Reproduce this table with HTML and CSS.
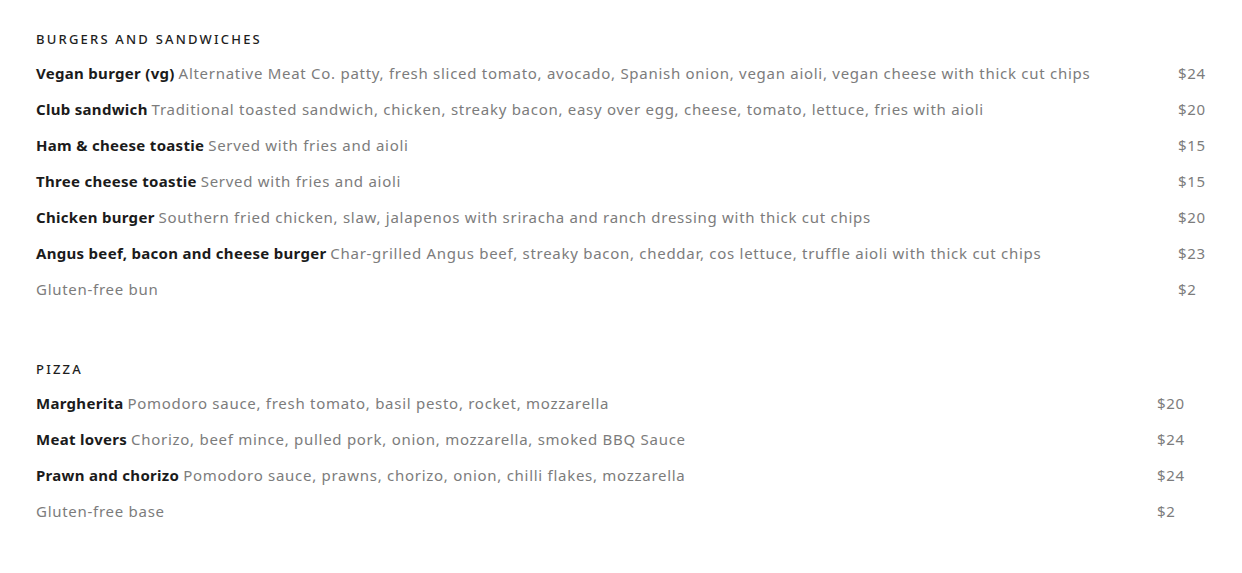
FILE: index.html
```html
<!DOCTYPE html>
<html lang="en">
<head>
<meta charset="utf-8">
<title>Menu</title>
<link rel="stylesheet" href="styles.css">
</head>
<body>
<main class="menu">
  <section class="menu-section">
    <h2 class="section-title">Burgers and sandwiches</h2>
    <div class="items">
      <div class="item">
        <p class="item-text"><span class="item-name">Vegan burger (vg)</span> <span class="item-desc">Alternative Meat Co. patty, fresh sliced tomato, avocado, Spanish onion, vegan aioli, vegan cheese with thick cut chips</span></p>
        <span class="price">$24</span>
      </div>
      <div class="item">
        <p class="item-text"><span class="item-name">Club sandwich</span> <span class="item-desc">Traditional toasted sandwich, chicken, streaky bacon, easy over egg, cheese, tomato, lettuce, fries with aioli</span></p>
        <span class="price">$20</span>
      </div>
      <div class="item">
        <p class="item-text"><span class="item-name">Ham &amp; cheese toastie</span> <span class="item-desc">Served with fries and aioli</span></p>
        <span class="price">$15</span>
      </div>
      <div class="item">
        <p class="item-text"><span class="item-name">Three cheese toastie</span> <span class="item-desc">Served with fries and aioli</span></p>
        <span class="price">$15</span>
      </div>
      <div class="item">
        <p class="item-text"><span class="item-name">Chicken burger</span> <span class="item-desc">Southern fried chicken, slaw, jalapenos with sriracha and ranch dressing with thick cut chips</span></p>
        <span class="price">$20</span>
      </div>
      <div class="item">
        <p class="item-text"><span class="item-name">Angus beef, bacon and cheese burger</span> <span class="item-desc">Char-grilled Angus beef, streaky bacon, cheddar, cos lettuce, truffle aioli with thick cut chips</span></p>
        <span class="price">$23</span>
      </div>
      <div class="item">
        <p class="item-text"><span class="item-desc">Gluten-free bun</span></p>
        <span class="price">$2</span>
      </div>
    </div>
  </section>
  <section class="menu-section menu-section--wide-price">
    <h2 class="section-title">Pizza</h2>
    <div class="items">
      <div class="item">
        <p class="item-text"><span class="item-name">Margherita</span> <span class="item-desc">Pomodoro sauce, fresh tomato, basil pesto, rocket, mozzarella</span></p>
        <span class="price">$20</span>
      </div>
      <div class="item">
        <p class="item-text"><span class="item-name">Meat lovers</span> <span class="item-desc">Chorizo, beef mince, pulled pork, onion, mozzarella, smoked BBQ Sauce</span></p>
        <span class="price">$24</span>
      </div>
      <div class="item">
        <p class="item-text"><span class="item-name">Prawn and chorizo</span> <span class="item-desc">Pomodoro sauce, prawns, chorizo, onion, chilli flakes, mozzarella</span></p>
        <span class="price">$24</span>
      </div>
      <div class="item">
        <p class="item-text"><span class="item-desc">Gluten-free base</span></p>
        <span class="price">$2</span>
      </div>
    </div>
  </section>
</main>
</body>
</html>
```

FILE: styles.css
```css
html, body {
  margin: 0;
  padding: 0;
  background: #ffffff;
}

body {
  font-family: "Noto Sans", "Liberation Sans", sans-serif;
  color: #1e1e1e;
}

.menu {
  display: flex;
  flex-direction: column;
  gap: 53px;
  padding: 30px 36px 0 36px;
}

.section-title {
  margin: 0 0 7px 0;
  font-size: 13px;
  line-height: 18px;
  font-weight: 500;
  letter-spacing: 2.2px;
  text-transform: uppercase;
  color: #1e1e1e;
}

.items {
  display: flex;
  flex-direction: column;
}

.item {
  display: grid;
  grid-template-columns: 1fr 28px;
  align-items: center;
  height: 36px;
}

.menu-section--wide-price .item {
  grid-template-columns: 1fr 49px;
}

.item-text {
  margin: 0;
  font-size: 15px;
  line-height: 36px;
  white-space: nowrap;
}

.item-name {
  font-weight: 700;
  letter-spacing: 0.3px;
  color: #1b1b1b;
}

.item-desc {
  letter-spacing: 0.72px;
  color: #7c7c7c;
}

.price {
  font-size: 15px;
  line-height: 36px;
  letter-spacing: 0.7px;
  color: #7c7c7c;
  white-space: nowrap;
}
```
